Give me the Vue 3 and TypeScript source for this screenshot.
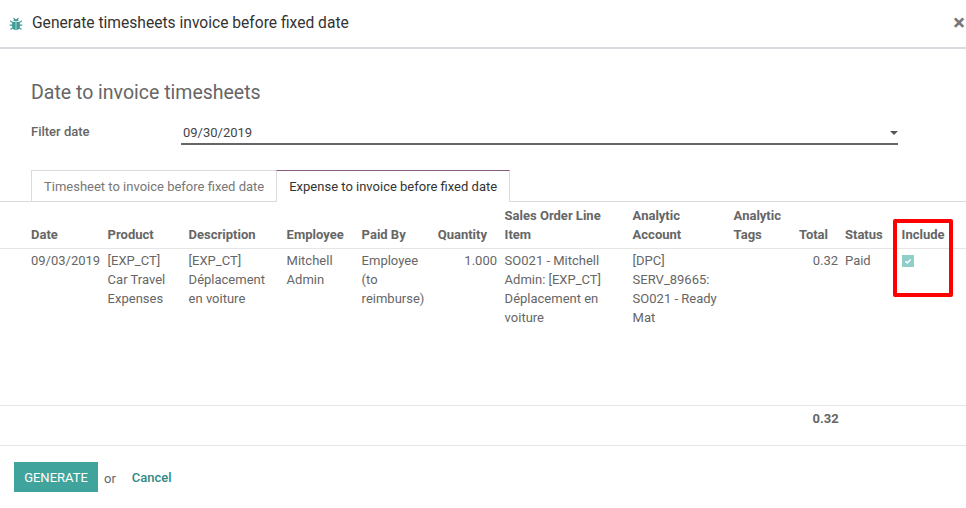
<script setup lang="ts">
interface Col { label: string[]; cls: string; width: number }
const cols: Col[] = [
  { label: ['Date'], cls: 'c-date', width: 108 },
  { label: ['Product'], cls: '', width: 81 },
  { label: ['Description'], cls: '', width: 98 },
  { label: ['Employee'], cls: '', width: 75 },
  { label: ['Paid By'], cls: '', width: 70 },
  { label: ['Quantity'], cls: 'c-qty', width: 73 },
  { label: ['Sales Order Line', 'Item'], cls: '', width: 128 },
  { label: ['Analytic', 'Account'], cls: '', width: 101 },
  { label: ['Analytic', 'Tags'], cls: '', width: 56 },
  { label: ['Total'], cls: 'c-total', width: 55 },
  { label: ['Status'], cls: 'c-status', width: 57 },
  { label: ['Include'], cls: '', width: 64 },
]
const row: string[] = [
  '09/03/2019',
  '[EXP_CT] Car Travel Expenses',
  '[EXP_CT] Déplacement en voiture',
  'Mitchell Admin',
  'Employee (to reimburse)',
  '1.000',
  'SO021 - Mitchell Admin: [EXP_CT] Déplacement en voiture',
  '[DPC] SERV_89665: SO021 - Ready Mat',
  '',
  '0.32',
  'Paid',
]
</script>

<template>
  <div class="page">
    <header class="head">
      <svg class="bug" viewBox="0 0 14 14" width="14" height="14" aria-hidden="true">
        <path fill="#3f9b96" d="M4.300 4.300C4.500 2.800 5.600 2 7 2s2.500.8 2.700 2.300zM3.200 5h3.500v8.200C4.700 13 3.200 11.800 3.200 10zM7.300 5h3.500v5c0 1.800-1.500 3-3.500 3.200z" />
        <path stroke="#3f9b96" stroke-width="1.200" fill="none" stroke-linecap="round" d="M1.600 4.200l2 1.400M12.400 4.200l-2 1.400M1.200 8.200h2.400M12.800 8.200h-2.400M1.800 12.200l2-1.600M12.200 12.200l-2-1.600M4.800 1.400l1 1.200M9.200 1.400l-1 1.200" />
      </svg>
      <h4 class="title">Generate timesheets invoice before fixed date</h4>
      <span class="close">×</span>
    </header>

    <section class="form">
      <h3 class="subtitle">Date to invoice timesheets</h3>
      <div class="filter">
        <label class="filter-label">Filter date</label>
        <div class="select">
          <span>09/30/2019</span>
          <i class="caret"></i>
        </div>
      </div>
    </section>

    <nav class="tabs">
      <a class="tab">Timesheet to invoice before fixed date</a>
      <a class="tab active">Expense to invoice before fixed date</a>
    </nav>

    <table class="grid">
      <colgroup>
        <col v-for="c in cols" :key="c.cls + c.label[0]" :style="{ width: c.width + 'px' }" />
      </colgroup>
      <thead>
        <tr>
          <th v-for="c in cols" :key="c.label.join()" :class="c.cls">
            <template v-for="(l, i) in c.label" :key="l"><br v-if="i > 0" />{{ l }}</template>
          </th>
        </tr>
      </thead>
      <tbody>
        <tr class="data">
          <td v-for="(v, i) in row" :key="i" :class="cols[i].cls">{{ v }}</td>
          <td><span class="check"><svg viewBox="0 0 12 12" width="12" height="12" aria-hidden="true"><path d="M3.500 6.200l1.800 1.700 3.300-3.400" fill="none" stroke="#fff" stroke-width="1.500" /></svg></span></td>
        </tr>
      </tbody>
      <tfoot>
        <tr>
          <td colspan="9"></td>
          <td class="sum">0.32</td>
          <td colspan="2"></td>
        </tr>
      </tfoot>
    </table>

    <footer class="foot">
      <button class="primary">GENERATE</button>
      <span class="or">or</span>
      <a class="cancel">Cancel</a>
    </footer>

    <div class="mark"></div>
  </div>
</template>

<style scoped>
.page {
  position: relative;
  width: 966px;
  height: 508px;
  overflow: hidden;
  background: #fff;
  font-family: Roboto, "Noto Sans", sans-serif;
  font-size: 13px;
  line-height: 19px;
  color: #666;
}
.head {
  display: flex;
  align-items: center;
  height: 46px;
  padding: 0 1px 1px 9px;
  border-bottom: 2px solid #d9dbe0;
  box-sizing: content-box;
}
.bug { flex: none; margin: 1px 9px 0 0; }
.title {
  flex: 1;
  margin: 0;
  font-size: 15.6px;
  font-weight: 400;
  color: #333;
}
.close {
  font-size: 22px;
  font-weight: 700;
  line-height: 22px;
  color: #777;
}
.form { padding: 32px 68px 0 31px; }
.subtitle {
  margin: 0;
  font-size: 19.5px;
  line-height: 24px;
  font-weight: 400;
  color: #666;
}
.filter {
  display: flex;
  align-items: flex-start;
  margin-top: 17px;
}
.filter-label {
  width: 150px;
  padding-top: 2px;
  font-weight: 500;
  line-height: 16px;
  color: #666;
}
.select {
  flex: 1;
  display: flex;
  justify-content: space-between;
  align-items: center;
  height: 21px;
  padding: 0 0 0 2px;
  border-bottom: 2px solid #666;
  color: #444;
}
.caret {
  width: 0;
  height: 0;
  border: 4px solid transparent;
  border-top-color: #555;
  border-bottom: 0;
}
.tabs {
  display: flex;
  margin-top: 25px;
  padding-left: 31px;
  height: 31px;
  border-bottom: 1px solid #d9dbe0;
}
.tab {
  height: 31px;
  padding: 6px 12px 0;
  box-sizing: border-box;
  border: 1px solid #d9dbe0;
  border-bottom: 0;
  margin-bottom: -1px;
  background: #fff;
  color: #777;
  line-height: 19px;
}
.tab:first-child { border-bottom: 1px solid #d9dbe0; height: 32px; border-right: 0; }
.tab.active {
  height: 32px;
  border-top-color: #875a7b;
  color: #333;
}
.grid {
  table-layout: fixed;
  width: 966px;
  margin-left: -0.4px;
  border-collapse: collapse;
}
th {
  height: 42px;
  padding: 0 0 4px;
  vertical-align: bottom;
  text-align: left;
  font-weight: 700;
  color: #666;
  border-bottom: 1px solid #e5e5e5;
}
td {
  padding: 2px 8px 0 0;
  vertical-align: top;
  color: #666;
}
th:first-child { padding-left: 31.4px; }
.data td { height: 157px; box-sizing: border-box; }
td.c-date { padding-left: 31.4px; padding-right: 0; white-space: nowrap; }
th.c-qty { text-align: right; padding-right: 17.6px; }
td.c-qty { text-align: right; padding-right: 7.6px; }
th.c-total { text-align: right; padding-right: 16.6px; }
td.c-total { text-align: right; padding-right: 6.6px; }
th.c-status, td.c-status { padding-left: .4px; }
tfoot td {
  height: 24px;
  padding: 0 0 15px;
  vertical-align: middle;
  border-top: 1px solid #e5e5e5;
  border-bottom: 1px solid #e5e5e5;
}
tfoot td.sum {
  text-align: right;
  padding-right: 6px;
  font-weight: 700;
}
.check {
  display: block;
  width: 12px;
  height: 12px;
  margin: 4px 0 0 0;
  background: #8fcfca;
}
.check svg { display: block; }
.foot {
  display: flex;
  align-items: center;
  height: 30px;
  padding: 16px 14px 0;
}
.primary {
  width: 84px;
  height: 30px;
  padding: 1px 0 0;
  border: 0;
  background: #40a49c;
  color: #fff;
  font: 400 13px/29px Roboto, "Noto Sans", sans-serif;
}
.or { margin: 2px 0 0 6px; }
.cancel {
  margin-left: 16px;
  font-weight: 500;
  color: #2d8a84;
}
.mark {
  position: absolute;
  left: 893px;
  top: 219px;
  width: 60px;
  height: 78px;
  box-sizing: border-box;
  border: 4px solid #f00;
  border-radius: 2px;
}
</style>
